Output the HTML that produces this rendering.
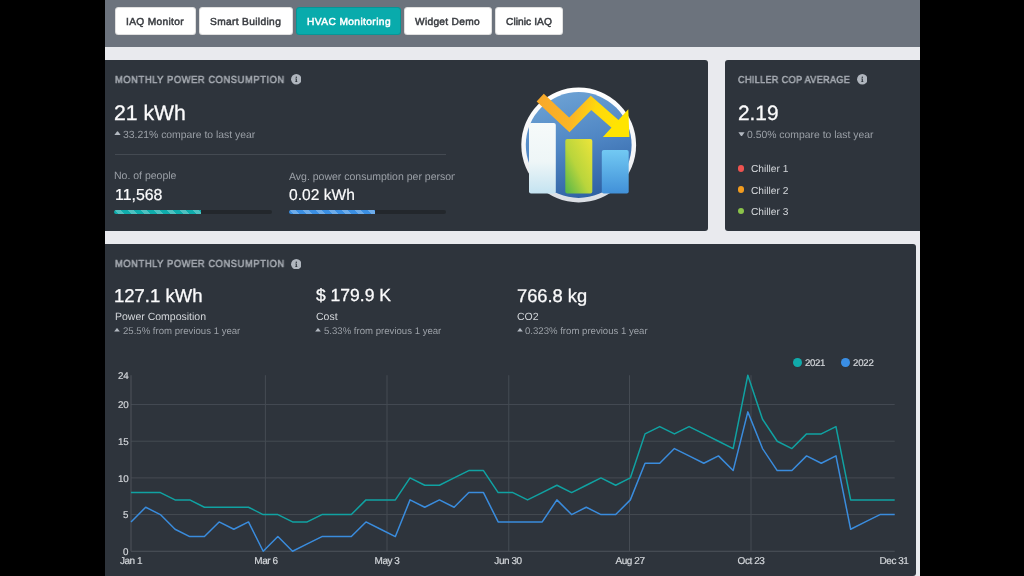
<!DOCTYPE html>
<html><head><meta charset="utf-8">
<style>
html,body{margin:0;padding:0;}
body{width:1024px;height:576px;overflow:hidden;background:#000;position:relative;font-family:"Liberation Sans",sans-serif;}
.t{position:absolute;white-space:nowrap;line-height:1;will-change:transform;text-rendering:geometricPrecision;}
.pg{position:absolute;left:105px;top:0;width:815px;height:576px;background:#e9eaee;overflow:hidden;}
.bar{position:absolute;left:0;top:0;width:815px;height:47px;background:#6c737d;}
.btn{position:absolute;top:6.9px;height:27.7px;background:#fff;border-radius:3.5px;box-shadow:inset 0 0 0 1px rgba(0,0,0,0.12);}
.card{position:absolute;background:#2e343c;border-radius:3px;}
</style></head><body>

<div class="pg"></div>
<div class="bar" style="left:105px"></div>
<div class="btn" style="left:115px;width:80.5px;background:#fff"></div>
<div class="btn" style="left:199px;width:93.5px;background:#fff"></div>
<div class="btn" style="left:296px;width:105px;background:#09abac"></div>
<div class="btn" style="left:404.25px;width:87.25px;background:#fff"></div>
<div class="btn" style="left:495px;width:68px;background:#fff"></div>
<div class="t" style="left:125.9px;top:18.17px;font-size:10.2px;color:#3a3d42;font-weight:normal;letter-spacing:0.33px;-webkit-text-stroke:0.5px #3a3d42;">IAQ Monitor</div>
<div class="t" style="left:210px;top:18.17px;font-size:10.2px;color:#3a3d42;font-weight:normal;letter-spacing:0.35px;-webkit-text-stroke:0.5px #3a3d42;">Smart Building</div>
<div class="t" style="left:306.5px;top:18.17px;font-size:10.2px;color:#fff;font-weight:normal;letter-spacing:0.4px;-webkit-text-stroke:0.5px #fff;">HVAC Monitoring</div>
<div class="t" style="left:414.75px;top:18.17px;font-size:10.2px;color:#3a3d42;font-weight:normal;letter-spacing:0.29px;-webkit-text-stroke:0.5px #3a3d42;">Widget Demo</div>
<div class="t" style="left:505.5px;top:18.17px;font-size:10.2px;color:#3a3d42;font-weight:normal;letter-spacing:0.06px;-webkit-text-stroke:0.5px #3a3d42;">Clinic IAQ</div>
<div class="card" style="left:105px;top:59.6px;width:603.2px;height:171.2px;border-top-left-radius:0;border-bottom-left-radius:0"></div>
<div class="card" style="left:725.2px;top:59.6px;width:194.8px;height:171.2px;border-top-right-radius:0;border-bottom-right-radius:0"></div>
<div class="card" style="left:105px;top:244px;width:811px;height:331.8px;border-top-left-radius:0;border-bottom-left-radius:0"></div>
<div class="t" style="left:114.9px;top:75.57px;font-size:10.2px;color:#a6abb2;font-weight:normal;letter-spacing:0.6px;-webkit-text-stroke:0.55px #a6abb2;transform:scaleX(0.92);transform-origin:0 0;">MONTHLY POWER CONSUMPTION</div>
<svg style="position:absolute;left:290.55px;top:74.4px" width="10.6" height="10.6" viewBox="0 0 10.6 10.6"><circle cx="5.3" cy="5.3" r="5.25" fill="#b0b6be"/><circle cx="5.3" cy="3.25" r="0.75" fill="#2e343c"/><path d="M4.35 4.6 H5.85 V7.2 H6.35 V7.95 H4.25 V7.2 H4.75 V5.2 H4.35Z" fill="#2e343c"/></svg>
<div class="t" style="left:114.2px;top:102.95px;font-size:21.2px;color:#fbfbfc;font-weight:normal;letter-spacing:0px;-webkit-text-stroke:0.3px #fbfbfc;">21 kWh</div>
<svg style="position:absolute;left:114.2px;top:130.9px" width="7" height="4.4" viewBox="0 0 7 4.4"><path d="M0.2 4.2 L3.0 0.6 Q3.5 0.1 4.0 0.6 L6.8 4.2Z" fill="#b3b9c1"/></svg>
<div class="t" style="left:123.2px;top:131.10px;font-size:10.4px;color:#9ba0a7;font-weight:normal;letter-spacing:0px;">33.21% compare to last year</div>
<div style="position:absolute;left:114.5px;top:153.5px;width:331.5px;height:1px;background:#444a52"></div>
<div class="t" style="left:113.8px;top:170.71px;font-size:10.5px;color:#9ba0a7;font-weight:normal;letter-spacing:0px;">No. of people</div>
<div class="t" style="left:115.0px;top:188.14px;font-size:15.9px;color:#fbfbfc;font-weight:normal;letter-spacing:0px;-webkit-text-stroke:0.2px #fbfbfc;">11,568</div>
<div class="t" style="left:288.8px;top:171.71px;font-size:10.5px;color:#9ba0a7;font-weight:normal;letter-spacing:0px;width:166px;overflow:hidden;">Avg. power consumption per person</div>
<div class="t" style="left:288.8px;top:187.99px;font-size:15.6px;color:#fbfbfc;font-weight:normal;letter-spacing:0px;-webkit-text-stroke:0.2px #fbfbfc;">0.02 kWh</div>
<div style="position:absolute;left:114.2px;top:209.8px;width:157.5px;height:4.2px;border-radius:2.1px;background:#23272c;overflow:hidden"><div style="width:86.8px;height:100%;background-color:#10acac;background-image:linear-gradient(45deg,rgba(255,255,255,0.26) 25%,transparent 25%,transparent 50%,rgba(255,255,255,0.26) 50%,rgba(255,255,255,0.26) 75%,transparent 75%,transparent);background-size:13px 13px"></div></div>
<div style="position:absolute;left:288.8px;top:209.8px;width:157.2px;height:4.2px;border-radius:2.1px;background:#23272c;overflow:hidden"><div style="width:86.59999999999997px;height:100%;background-color:#3b8fe3;background-image:linear-gradient(45deg,rgba(255,255,255,0.26) 25%,transparent 25%,transparent 50%,rgba(255,255,255,0.26) 50%,rgba(255,255,255,0.26) 75%,transparent 75%,transparent);background-size:13px 13px"></div></div>
<svg style="position:absolute;left:515px;top:80px" width="130" height="130" viewBox="515 80 130 130">
<defs>
<linearGradient id="gr" x1="0" y1="0" x2="0" y2="1"><stop offset="0" stop-color="#ffffff"/><stop offset="0.6" stop-color="#f4f5f7"/><stop offset="1" stop-color="#d9dde3"/></linearGradient>
<linearGradient id="gc" x1="0.3" y1="0" x2="0.6" y2="1"><stop offset="0" stop-color="#6da2d4"/><stop offset="0.5" stop-color="#4f86c4"/><stop offset="1" stop-color="#2f61a3"/></linearGradient>
<linearGradient id="b1" x1="0" y1="0" x2="0" y2="1"><stop offset="0" stop-color="#f6fafa"/><stop offset="0.55" stop-color="#eef6f7"/><stop offset="1" stop-color="#c4e3f1"/></linearGradient>
<linearGradient id="b2" x1="1" y1="0" x2="0" y2="1"><stop offset="0" stop-color="#ede53a"/><stop offset="0.55" stop-color="#b9d53c"/><stop offset="1" stop-color="#52b54a"/></linearGradient>
<linearGradient id="b3" x1="0" y1="0" x2="0" y2="1"><stop offset="0" stop-color="#72c9f3"/><stop offset="1" stop-color="#4190d8"/></linearGradient>
<linearGradient id="ar" gradientUnits="userSpaceOnUse" x1="540" y1="100" x2="630" y2="130"><stop offset="0" stop-color="#f8a92a"/><stop offset="0.38" stop-color="#fbb526"/><stop offset="0.58" stop-color="#ffd80c"/><stop offset="1" stop-color="#ffe800"/></linearGradient>
</defs>
<circle cx="578.7" cy="145" r="57.4" fill="url(#gr)"/>
<circle cx="578.7" cy="145" r="52.9" fill="url(#gc)"/>
<rect x="529" y="123" width="26.8" height="70.6" rx="2" fill="url(#b1)"/>
<rect x="565.3" y="139" width="27" height="54.6" rx="2" fill="url(#b2)"/>
<rect x="601.8" y="150.1" width="26.9" height="43.5" rx="2" fill="url(#b3)"/>
<polyline points="540.2,97.6 569.3,124.9 591,102.9 617,125.6" fill="none" stroke="url(#ar)" stroke-width="10.5" stroke-linejoin="miter" stroke-linecap="butt"/>
<path d="M628.3 109.3 L629.4 136.9 L602.9 136.9 Z" fill="#ffe400"/>
</svg>
<div class="t" style="left:738.06px;top:75.85px;font-size:10.1px;color:#a6abb2;font-weight:normal;letter-spacing:0.38px;-webkit-text-stroke:0.55px #a6abb2;transform:scaleX(0.9);transform-origin:0 0;">CHILLER COP AVERAGE</div>
<svg style="position:absolute;left:856.6px;top:74.10000000000001px" width="10.6" height="10.6" viewBox="0 0 10.6 10.6"><circle cx="5.3" cy="5.3" r="5.25" fill="#b0b6be"/><circle cx="5.3" cy="3.25" r="0.75" fill="#2e343c"/><path d="M4.35 4.6 H5.85 V7.2 H6.35 V7.95 H4.25 V7.2 H4.75 V5.2 H4.35Z" fill="#2e343c"/></svg>
<div class="t" style="left:737.5px;top:103.99px;font-size:20.8px;color:#fbfbfc;font-weight:normal;letter-spacing:0px;-webkit-text-stroke:0.3px #fbfbfc;">2.19</div>
<svg style="position:absolute;left:737.8px;top:131.70000000000002px" width="7" height="4.6" viewBox="0 0 7 4.6"><path d="M0.4 0.2 L6.6 0.2 L4.0 3.9 Q3.5 4.5 3.0 3.9Z" fill="#b3b9c1"/></svg>
<div class="t" style="left:746.8px;top:130.50px;font-size:10.4px;color:#9ba0a7;font-weight:normal;letter-spacing:0px;">0.50% compare to last year</div>
<div style="position:absolute;left:737.7px;top:164.79999999999998px;width:6.8px;height:6.8px;border-radius:50%;background:#ef5350"></div>
<div class="t" style="left:750.9px;top:165.27px;font-size:10.2px;color:#d3d6da;font-weight:normal;letter-spacing:0px;">Chiller 1</div>
<div style="position:absolute;left:737.7px;top:186.14999999999998px;width:6.8px;height:6.8px;border-radius:50%;background:#f39c1f"></div>
<div class="t" style="left:750.9px;top:186.62px;font-size:10.2px;color:#d3d6da;font-weight:normal;letter-spacing:0px;">Chiller 2</div>
<div style="position:absolute;left:737.7px;top:207.49999999999997px;width:6.8px;height:6.8px;border-radius:50%;background:#8bc34a"></div>
<div class="t" style="left:750.9px;top:207.97px;font-size:10.2px;color:#d3d6da;font-weight:normal;letter-spacing:0px;">Chiller 3</div>
<div class="t" style="left:114.9px;top:259.57px;font-size:10.2px;color:#a6abb2;font-weight:normal;letter-spacing:0.6px;-webkit-text-stroke:0.55px #a6abb2;transform:scaleX(0.92);transform-origin:0 0;">MONTHLY POWER CONSUMPTION</div>
<svg style="position:absolute;left:290.55px;top:258.5px" width="10.6" height="10.6" viewBox="0 0 10.6 10.6"><circle cx="5.3" cy="5.3" r="5.25" fill="#b0b6be"/><circle cx="5.3" cy="3.25" r="0.75" fill="#2e343c"/><path d="M4.35 4.6 H5.85 V7.2 H6.35 V7.95 H4.25 V7.2 H4.75 V5.2 H4.35Z" fill="#2e343c"/></svg>
<div class="t" style="left:113.9px;top:286.64px;font-size:18.5px;color:#fbfbfc;font-weight:normal;letter-spacing:0px;-webkit-text-stroke:0.3px #fbfbfc;">127.1 kWh</div>
<div class="t" style="left:114.9px;top:312.01px;font-size:10.5px;color:#d3d6da;font-weight:normal;letter-spacing:0px;">Power Composition</div>
<svg style="position:absolute;left:114.30000000000001px;top:328.1px" width="6" height="3.8" viewBox="0 0 7 4.4"><path d="M0.2 4.2 L3.0 0.6 Q3.5 0.1 4.0 0.6 L6.8 4.2Z" fill="#b3b9c1"/></svg>
<div class="t" style="left:122.7px;top:326.97px;font-size:9.6px;color:#9ba0a7;font-weight:normal;letter-spacing:0px;">25.5% from previous 1 year</div>
<div class="t" style="left:315.9px;top:287.49px;font-size:17.5px;color:#fbfbfc;font-weight:normal;letter-spacing:0px;-webkit-text-stroke:0.3px #fbfbfc;">$ 179.9 K</div>
<div class="t" style="left:315.9px;top:312.01px;font-size:10.5px;color:#d3d6da;font-weight:normal;letter-spacing:0px;">Cost</div>
<svg style="position:absolute;left:315.29999999999995px;top:328.1px" width="6" height="3.8" viewBox="0 0 7 4.4"><path d="M0.2 4.2 L3.0 0.6 Q3.5 0.1 4.0 0.6 L6.8 4.2Z" fill="#b3b9c1"/></svg>
<div class="t" style="left:323.7px;top:326.97px;font-size:9.6px;color:#9ba0a7;font-weight:normal;letter-spacing:0px;">5.33% from previous 1 year</div>
<div class="t" style="left:517.3px;top:286.81px;font-size:18.3px;color:#fbfbfc;font-weight:normal;letter-spacing:0px;-webkit-text-stroke:0.3px #fbfbfc;">766.8 kg</div>
<div class="t" style="left:517.3px;top:312.01px;font-size:10.5px;color:#d3d6da;font-weight:normal;letter-spacing:0px;">CO2</div>
<svg style="position:absolute;left:516.6999999999999px;top:328.1px" width="6" height="3.8" viewBox="0 0 7 4.4"><path d="M0.2 4.2 L3.0 0.6 Q3.5 0.1 4.0 0.6 L6.8 4.2Z" fill="#b3b9c1"/></svg>
<div class="t" style="left:525.0999999999999px;top:326.97px;font-size:9.6px;color:#9ba0a7;font-weight:normal;letter-spacing:0px;">0.323% from previous 1 year</div>
<div style="position:absolute;left:793.3px;top:358px;width:8.8px;height:8.8px;border-radius:50%;background:#11aaaa"></div>
<div class="t" style="left:805.3px;top:359.47px;font-size:9.6px;color:#d3d6da;font-weight:normal;letter-spacing:-0.3px;-webkit-text-stroke:0.2px #d3d6da;">2021</div>
<div style="position:absolute;left:841.3px;top:358px;width:8.8px;height:8.8px;border-radius:50%;background:#3a8ee4"></div>
<div class="t" style="left:853.4px;top:359.47px;font-size:9.6px;color:#d3d6da;font-weight:normal;letter-spacing:-0.2px;-webkit-text-stroke:0.2px #d3d6da;">2022</div>
<svg style="position:absolute;left:0;top:0" width="1024" height="576" viewBox="0 0 1024 576">
<line x1="131.0" y1="514.57" x2="894.7" y2="514.57" stroke="#454b53" stroke-width="1"/>
<line x1="131.0" y1="477.90" x2="894.7" y2="477.90" stroke="#454b53" stroke-width="1"/>
<line x1="131.0" y1="441.22" x2="894.7" y2="441.22" stroke="#454b53" stroke-width="1"/>
<line x1="131.0" y1="404.54" x2="894.7" y2="404.54" stroke="#454b53" stroke-width="1"/>
<line x1="265.4" y1="375.2" x2="265.4" y2="551.25" stroke="#454b53" stroke-width="1"/>
<line x1="387" y1="375.2" x2="387" y2="551.25" stroke="#454b53" stroke-width="1"/>
<line x1="508.75" y1="375.2" x2="508.75" y2="551.25" stroke="#454b53" stroke-width="1"/>
<line x1="629.5" y1="375.2" x2="629.5" y2="551.25" stroke="#454b53" stroke-width="1"/>
<line x1="751" y1="375.2" x2="751" y2="551.25" stroke="#454b53" stroke-width="1"/>
<line x1="131.0" y1="375.2" x2="131.0" y2="551.25" stroke="#4e535b" stroke-width="1"/>
<line x1="131.0" y1="551.25" x2="894.7" y2="551.25" stroke="#4e535b" stroke-width="1"/>
<polyline points="131.00,492.57 145.69,492.57 160.37,492.57 175.06,499.90 189.75,499.90 204.43,507.24 219.12,507.24 233.81,507.24 248.49,507.24 263.18,514.57 277.87,514.57 292.55,521.91 307.24,521.91 321.93,514.57 336.61,514.57 351.30,514.57 365.98,499.90 380.67,499.90 395.36,499.90 410.04,477.90 424.73,485.23 439.42,485.23 454.10,477.90 468.79,470.56 483.48,470.56 498.16,492.57 512.85,492.57 527.54,499.90 542.22,492.57 556.91,485.23 571.60,492.57 586.28,485.23 600.97,477.90 615.66,485.23 630.34,477.90 645.03,433.88 659.72,426.55 674.40,433.88 689.09,426.55 703.78,433.88 718.46,441.22 733.15,448.55 747.83,375.20 762.52,419.21 777.21,441.22 791.89,448.55 806.58,433.88 821.27,433.88 835.95,426.55 850.64,499.90 865.33,499.90 880.01,499.90 894.70,499.90" fill="none" stroke="#10a2a2" stroke-width="1.5" stroke-linejoin="round"/>
<polyline points="131.00,521.91 145.69,507.24 160.37,514.57 175.06,529.24 189.75,536.58 204.43,536.58 219.12,521.91 233.81,529.24 248.49,521.91 263.18,551.25 277.87,536.58 292.55,551.25 307.24,543.91 321.93,536.58 336.61,536.58 351.30,536.58 365.98,521.91 380.67,529.24 395.36,536.58 410.04,499.90 424.73,507.24 439.42,499.90 454.10,507.24 468.79,492.57 483.48,492.57 498.16,521.91 512.85,521.91 527.54,521.91 542.22,521.91 556.91,499.90 571.60,514.57 586.28,507.24 600.97,514.57 615.66,514.57 630.34,499.90 645.03,463.23 659.72,463.23 674.40,448.55 689.09,455.89 703.78,463.23 718.46,455.89 733.15,470.56 747.83,411.88 762.52,448.55 777.21,470.56 791.89,470.56 806.58,455.89 821.27,463.23 835.95,455.89 850.64,529.24 865.33,521.91 880.01,514.57 894.70,514.57" fill="none" stroke="#3a8cdd" stroke-width="1.5" stroke-linejoin="round"/>
</svg>
<div class="t" style="right:895.6px;top:547.95px;font-size:9.8px;letter-spacing:-0.3px;color:#d3d6da;-webkit-text-stroke:0.2px #d3d6da">0</div>
<div class="t" style="right:895.6px;top:511.28px;font-size:9.8px;letter-spacing:-0.3px;color:#d3d6da;-webkit-text-stroke:0.2px #d3d6da">5</div>
<div class="t" style="right:895.6px;top:474.60px;font-size:9.8px;letter-spacing:-0.3px;color:#d3d6da;-webkit-text-stroke:0.2px #d3d6da">10</div>
<div class="t" style="right:895.6px;top:437.92px;font-size:9.8px;letter-spacing:-0.3px;color:#d3d6da;-webkit-text-stroke:0.2px #d3d6da">15</div>
<div class="t" style="right:895.6px;top:401.25px;font-size:9.8px;letter-spacing:-0.3px;color:#d3d6da;-webkit-text-stroke:0.2px #d3d6da">20</div>
<div class="t" style="right:895.6px;top:371.90px;font-size:9.8px;letter-spacing:-0.3px;color:#d3d6da;-webkit-text-stroke:0.2px #d3d6da">24</div>
<div class="t" style="left:80.69999999999999px;width:100px;text-align:center;top:556.53px;font-size:10px;letter-spacing:-0.45px;color:#d3d6da;-webkit-text-stroke:0.2px #d3d6da">Jan 1</div>
<div class="t" style="left:215.60000000000002px;width:100px;text-align:center;top:556.53px;font-size:10px;letter-spacing:-0.45px;color:#d3d6da;-webkit-text-stroke:0.2px #d3d6da">Mar 6</div>
<div class="t" style="left:337px;width:100px;text-align:center;top:556.53px;font-size:10px;letter-spacing:-0.45px;color:#d3d6da;-webkit-text-stroke:0.2px #d3d6da">May 3</div>
<div class="t" style="left:458.4px;width:100px;text-align:center;top:556.53px;font-size:10px;letter-spacing:-0.45px;color:#d3d6da;-webkit-text-stroke:0.2px #d3d6da">Jun 30</div>
<div class="t" style="left:579.5px;width:100px;text-align:center;top:556.53px;font-size:10px;letter-spacing:-0.45px;color:#d3d6da;-webkit-text-stroke:0.2px #d3d6da">Aug 27</div>
<div class="t" style="left:701px;width:100px;text-align:center;top:556.53px;font-size:10px;letter-spacing:-0.45px;color:#d3d6da;-webkit-text-stroke:0.2px #d3d6da">Oct 23</div>
<div class="t" style="left:844.3px;width:100px;text-align:center;top:556.53px;font-size:10px;letter-spacing:-0.45px;color:#d3d6da;-webkit-text-stroke:0.2px #d3d6da">Dec 31</div>
</body></html>
